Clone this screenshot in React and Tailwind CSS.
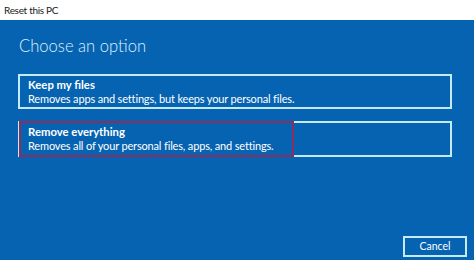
export default function App() {
  return (
    <div className="w-[474px] h-[260px] flex flex-col overflow-hidden" style={{ fontFamily: 'Lato, "Open Sans", sans-serif' }}>
      <div className="h-[20px] bg-white flex items-center pl-[4px] text-[10px] tracking-[-0.3px] text-[#1a1a1a]">
        Reset this PC
      </div>
      <div className="flex-1 bg-[#0663b1] flex flex-col pl-[18px] pr-[7px]">
        <div className="mt-[15px] text-[16.6px] leading-[22px] font-light text-[#dff2fb] pl-[1px]">
          Choose an option
        </div>
        <div className="mt-[17px] mr-[15px] h-[35px] border-2 border-[#c4ebf5] flex flex-col justify-center pl-[8px] text-white">
          <div className="text-[11.3px] leading-[14px] font-bold">Keep my files</div>
          <div className="text-[11px] leading-[14px] tracking-[-0.16px]">Removes apps and settings, but keeps your personal files.</div>
        </div>
        <div className="relative mt-[12px] mr-[15px] h-[36px] border-2 border-[#c4ebf5] flex flex-col justify-center pl-[8px] text-white">
          <div className="absolute -left-[1px] -top-[2px] -bottom-[2px] w-[275px] border-2 border-[#8c2d5e]" />
          <div className="text-[11.3px] leading-[14px] font-bold">Remove everything</div>
          <div className="text-[11px] leading-[14px] tracking-[-0.16px]">Removes all of your personal files, apps, and settings.</div>
        </div>
        <div className="flex-1" />
        <div className="flex justify-end pb-[3px]">
          <div className="w-[64px] h-[21px] border-2 border-[#c4ebf5] flex items-center justify-center text-[10.5px] text-white">
            Cancel
          </div>
        </div>
      </div>
    </div>
  );
}
